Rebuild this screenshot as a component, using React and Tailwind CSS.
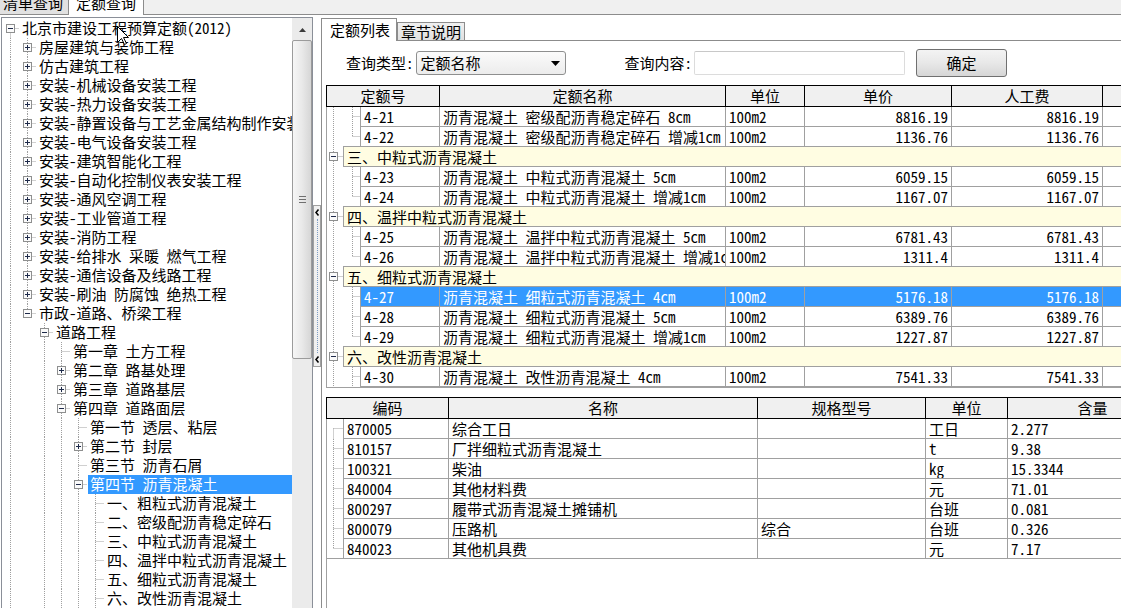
import React from 'react';

const FONT = "font-['Noto_Sans_Mono_CJK_SC','Noto_Sans_CJK_SC',sans-serif]";
const DOT = { stroke: '#a0a0a0', strokeDasharray: '1 1', strokeWidth: 1 };

const TREE = [
  { label: '北京市建设工程预算定额(2012)', level: 0, kind: 'minus', last: false },
  { label: '房屋建筑与装饰工程', level: 1, kind: 'plus' },
  { label: '仿古建筑工程', level: 1, kind: 'plus' },
  { label: '安装-机械设备安装工程', level: 1, kind: 'plus' },
  { label: '安装-热力设备安装工程', level: 1, kind: 'plus' },
  { label: '安装-静置设备与工艺金属结构制作安装工程', level: 1, kind: 'plus' },
  { label: '安装-电气设备安装工程', level: 1, kind: 'plus' },
  { label: '安装-建筑智能化工程', level: 1, kind: 'plus' },
  { label: '安装-自动化控制仪表安装工程', level: 1, kind: 'plus' },
  { label: '安装-通风空调工程', level: 1, kind: 'plus' },
  { label: '安装-工业管道工程', level: 1, kind: 'plus' },
  { label: '安装-消防工程', level: 1, kind: 'plus' },
  { label: '安装-给排水 采暖 燃气工程', level: 1, kind: 'plus' },
  { label: '安装-通信设备及线路工程', level: 1, kind: 'plus' },
  { label: '安装-刷油 防腐蚀 绝热工程', level: 1, kind: 'plus' },
  { label: '市政-道路、桥梁工程', level: 1, kind: 'minus', last: true },
  { label: '道路工程', level: 2, kind: 'minus' },
  { label: '第一章 土方工程', level: 3, kind: 'leaf' },
  { label: '第二章 路基处理', level: 3, kind: 'plus' },
  { label: '第三章 道路基层', level: 3, kind: 'plus' },
  { label: '第四章 道路面层', level: 3, kind: 'minus' },
  { label: '第一节 透层、粘层', level: 4, kind: 'leaf' },
  { label: '第二节 封层', level: 4, kind: 'plus' },
  { label: '第三节 沥青石屑', level: 4, kind: 'leaf' },
  { label: '第四节 沥青混凝土', level: 4, kind: 'minus', selected: true },
  { label: '一、粗粒式沥青混凝土', level: 5, kind: 'leaf' },
  { label: '二、密级配沥青稳定碎石', level: 5, kind: 'leaf' },
  { label: '三、中粒式沥青混凝土', level: 5, kind: 'leaf' },
  { label: '四、温拌中粒式沥青混凝土', level: 5, kind: 'leaf' },
  { label: '五、细粒式沥青混凝土', level: 5, kind: 'leaf' },
  { label: '六、改性沥青混凝土', level: 5, kind: 'leaf' },
];

function withGuides(nodes) {
  return nodes.map((n, i) => {
    const verticals = [];
    for (let k = 1; k < n.level; k++) {
      for (let j = i - 1; j >= 0; j--) {
        if (nodes[j].level === k) {
          if (!nodes[j].last) verticals.push(k);
          break;
        }
        if (nodes[j].level < k) break;
      }
    }
    if (n.level > 0 && !nodes[0].last) verticals.push(0);
    return { ...n, verticals };
  });
}

function Box({ cx, cy, minus }) {
  return (
    <g>
      <rect x={cx - 4} y={cy - 4} width="8" height="8" fill="#fbfbfb" stroke="#8e8f8f" />
      <line x1={cx - 2.5} y1={cy} x2={cx + 2.5} y2={cy} stroke="#1e2a4a" />
      {!minus && <line x1={cx} y1={cy - 2.5} x2={cx} y2={cy + 2.5} stroke="#1e2a4a" />}
    </g>
  );
}

function TreeRow({ node }) {
  const { label, level, kind, last, verticals, selected } = node;
  const width = 18 + 17 * level;
  const cx = 8.5 + 17 * level;
  return (
    <div className="flex h-[19px] items-start whitespace-nowrap">
      <svg width={width} height="19" className="block shrink-0">
        {verticals.map((k) => (
          <line key={k} x1={8.5 + 17 * k} y1="0" x2={8.5 + 17 * k} y2="19" {...DOT} />
        ))}
        {level > 0 ? (
          <line x1={cx} y1="0" x2={cx} y2={last ? 9.5 : 19} {...DOT} />
        ) : (
          !last && <line x1={cx} y1="9.5" x2={cx} y2="19" {...DOT} />
        )}
        <line x1={cx} y1="9.5" x2={width - 1} y2="9.5" {...DOT} />
        {kind !== 'leaf' && <Box cx={cx} cy={9.5} minus={kind === 'minus'} />}
      </svg>
      <span
        className={
          selected
            ? 'flex-1 h-[19px] bg-[#3399ff] text-white pl-[2px] leading-[17px]'
            : 'h-[19px] pl-[2px] leading-[17px]'
        }
      >
        {label}
      </span>
    </div>
  );
}

function Scrollbar() {
  return (
    <div className="w-[20px] shrink-0 bg-[#ebebeb] flex flex-col">
      <div className="h-[22px] flex items-center justify-center pt-[1px]">
        <svg width="7" height="4" className="block">
          <polygon points="0,4 7,4 3.5,0" fill="#3c3c3c" />
        </svg>
      </div>
      <div className="h-[319px] rounded-[2px] border border-[#9b9b9b] bg-gradient-to-r from-[#f6f6f6] via-[#e9e9e9] to-[#d6d6d6] flex items-center justify-center">
        <svg width="7" height="7" className="block">
          <line x1="0" y1="0.5" x2="7" y2="0.5" stroke="#6f6f6f" />
          <line x1="0" y1="3.5" x2="7" y2="3.5" stroke="#6f6f6f" />
          <line x1="0" y1="6.5" x2="7" y2="6.5" stroke="#6f6f6f" />
        </svg>
      </div>
    </div>
  );
}

function Chevron() {
  return (
    <svg width="5" height="7" className="block">
      <polyline points="3.5,0.5 1,3.5 3.5,6.5" fill="none" stroke="#000" strokeWidth="1.6" />
    </svg>
  );
}

function Splitter() {
  return (
    <div className="w-[8px] shrink-0 pt-[190px]">
      <div className="h-[162px] border border-[#a0a0a0] bg-[#f0f0f0] flex flex-col items-center py-[3px]">
        <Chevron />
        <div className="flex-1 my-[3px] border-l border-dotted border-[#7d9cc4]" />
        <Chevron />
      </div>
    </div>
  );
}

const TOP_ROWS = [
  { code: '4-21', name: '沥青混凝土 密级配沥青稳定碎石 8cm', price: '8816.19' },
  { code: '4-22', name: '沥青混凝土 密级配沥青稳定碎石 增减1cm', price: '1136.76', last: true },
  { group: '三、中粒式沥青混凝土' },
  { code: '4-23', name: '沥青混凝土 中粒式沥青混凝土 5cm', price: '6059.15' },
  { code: '4-24', name: '沥青混凝土 中粒式沥青混凝土 增减1cm', price: '1167.07', last: true },
  { group: '四、温拌中粒式沥青混凝土' },
  { code: '4-25', name: '沥青混凝土 温拌中粒式沥青混凝土 5cm', price: '6781.43' },
  { code: '4-26', name: '沥青混凝土 温拌中粒式沥青混凝土 增减1cm', price: '1311.4', last: true },
  { group: '五、细粒式沥青混凝土' },
  { code: '4-27', name: '沥青混凝土 细粒式沥青混凝土 4cm', price: '5176.18', sel: true },
  { code: '4-28', name: '沥青混凝土 细粒式沥青混凝土 5cm', price: '6389.76' },
  { code: '4-29', name: '沥青混凝土 细粒式沥青混凝土 增减1cm', price: '1227.87', last: true },
  { group: '六、改性沥青混凝土' },
  { code: '4-30', name: '沥青混凝土 改性沥青混凝土 4cm', price: '7541.33' },
];

const BOTTOM_ROWS = [
  ['870005', '综合工日', '', '工日', '2.277'],
  ['810157', '厂拌细粒式沥青混凝土', '', 't', '9.38'],
  ['100321', '柴油', '', 'kg', '15.3344'],
  ['840004', '其他材料费', '', '元', '71.01'],
  ['800297', '履带式沥青混凝土摊铺机', '', '台班', '0.081'],
  ['800079', '压路机', '综合', '台班', '0.326'],
  ['840023', '其他机具费', '', '元', '7.17'],
];

const HCELL = 'h-full shrink-0 border-r border-black bg-[#f0f0f0] text-center leading-[19px] overflow-hidden whitespace-nowrap';
const CELL = 'h-full shrink-0 border-r border-[#a0a0a0] px-[3px] leading-[19px] overflow-hidden whitespace-nowrap';
const NCELL = 'h-full shrink-0 border-r border-[#a0a0a0] pr-[3px] text-right leading-[19px] overflow-hidden whitespace-nowrap';

function TopDataRow({ row, nextIsGroup }) {
  const sel = row.sel;
  return (
    <div className="flex h-[20px]">
      <svg width="33" height="20" className="block shrink-0">
        <line x1="6.5" y1="0" x2="6.5" y2="20" {...DOT} />
        <line x1="25.5" y1="0" x2="25.5" y2={row.last ? 9.5 : 20} {...DOT} />
        <line x1="25.5" y1="9.5" x2="33" y2="9.5" {...DOT} />
        {nextIsGroup && <line x1="16" y1="19.5" x2="33" y2="19.5" stroke="#a0a0a0" />}
      </svg>
      <div className={sel ? 'flex flex-1 border-b border-[#a0a0a0] bg-[#3399ff] text-white' : 'flex flex-1 border-b border-[#a0a0a0]'}>
        <div className={`${CELL} w-[80px] border-l`}>{row.code}</div>
        <div className={`${CELL} w-[286px]`}>{row.name}</div>
        <div className={`${CELL} w-[79px]`}>100m2</div>
        <div className={`${NCELL} w-[147px]`}>{row.price}</div>
        <div className={`${NCELL} w-[151px]`}>{row.price}</div>
        <div className={`${CELL} w-[200px]`}></div>
      </div>
    </div>
  );
}

function TopGroupRow({ row }) {
  return (
    <div className="flex h-[20px]">
      <svg width="16" height="20" className="block shrink-0">
        <line x1="6.5" y1="0" x2="6.5" y2="20" {...DOT} />
        <line x1="6.5" y1="9.5" x2="16" y2="9.5" {...DOT} />
        <Box cx={6.5} cy={9.5} minus />
      </svg>
      <div className="flex-1 border-l border-b border-[#a0a0a0] bg-[#fffde2] pl-[3px] leading-[19px] whitespace-nowrap">
        {row.group}
      </div>
    </div>
  );
}

function TopTable() {
  return (
    <div className="h-[303px] shrink-0 overflow-hidden border-b border-[#a0a0a0] flex flex-col">
      <div className="flex h-[22px] shrink-0 border-t border-b border-l border-black">
        <div className={`${HCELL} w-[113px]`}>定额号</div>
        <div className={`${HCELL} w-[286px]`}>定额名称</div>
        <div className={`${HCELL} w-[79px]`}>单位</div>
        <div className={`${HCELL} w-[147px]`}>单价</div>
        <div className={`${HCELL} w-[151px]`}>人工费</div>
        <div className={`${HCELL} w-[200px]`}></div>
      </div>
      <div className="flex-1 border-l border-[#a0a0a0]">
        {TOP_ROWS.map((r, i) =>
          r.group ? (
            <TopGroupRow key={i} row={r} />
          ) : (
            <TopDataRow key={i} row={r} nextIsGroup={!!(TOP_ROWS[i + 1] && TOP_ROWS[i + 1].group)} />
          )
        )}
      </div>
    </div>
  );
}

function BottomTable() {
  const n = BOTTOM_ROWS.length;
  return (
    <div className="flex-1 flex flex-col mt-[9px] min-h-0">
      <div className="flex h-[22px] shrink-0 border-t border-b border-l border-black">
        <div className={`${HCELL} w-[122px]`}>编码</div>
        <div className={`${HCELL} w-[309px]`}>名称</div>
        <div className={`${HCELL} w-[168px]`}>规格型号</div>
        <div className={`${HCELL} w-[82px]`}>单位</div>
        <div className={`${HCELL} w-[170px]`}>含量</div>
      </div>
      <div className="flex-1 border-l border-[#a0a0a0]">
        {BOTTOM_ROWS.map((r, i) => (
          <div key={i} className="flex h-[20px]">
            <svg width="16" height="20" className="block shrink-0">
              <line x1="6.5" y1={i === 0 ? 9.5 : 0} x2="6.5" y2={i === n - 1 ? 9.5 : 20} {...DOT} />
              <line x1="6.5" y1="9.5" x2="16" y2="9.5" {...DOT} />
              <line x1="0" y1="19.5" x2="16" y2="19.5" stroke={i === n - 1 ? '#a0a0a0' : 'none'} />
            </svg>
            <div className="flex flex-1 border-b border-[#a0a0a0]">
              <div className={`${CELL} w-[106px] border-l`}>{r[0]}</div>
              <div className={`${CELL} w-[309px]`}>{r[1]}</div>
              <div className={`${CELL} w-[168px]`}>{r[2]}</div>
              <div className={`${CELL} w-[82px]`}>{r[3]}</div>
              <div className={`${CELL} w-[170px]`}>{r[4]}</div>
            </div>
          </div>
        ))}
      </div>
    </div>
  );
}

function QueryRow() {
  return (
    <div className="h-[44px] shrink-0 flex items-center pl-[20px] whitespace-nowrap">
      <span className="leading-[18px]">查询类型:</span>
      <div className="ml-[2px] w-[150px] h-[24px] rounded-[3px] border border-[#8e8f8f] bg-gradient-to-b from-[#fbfbfb] to-[#ececec] flex items-center justify-between pl-[4px] pr-[5px]">
        <span className="leading-[18px]">定额名称</span>
        <svg width="9" height="5" className="block">
          <polygon points="0,0 9,0 4.5,5" fill="#000" />
        </svg>
      </div>
      <span className="ml-[59px] leading-[18px]">查询内容:</span>
      <div className="ml-[2px] w-[211px] h-[24px] rounded-[2px] border border-[#dcdcdc] border-t-[#c8c8c8] bg-white" />
      <div className="ml-[11px] w-[91px] h-[28px] rounded-[3px] border border-[#707070] bg-gradient-to-b from-[#f3f3f3] via-[#e8e8e8] to-[#d6d6d6] flex items-center justify-center">
        <span className="leading-[18px]">确定</span>
      </div>
    </div>
  );
}

function RightPanel() {
  return (
    <div className="flex-1 min-w-0 flex flex-col pt-[3px]">
      <div className="flex items-end h-[23px] shrink-0">
        <div className="w-[76px] h-[23px] border-l border-t border-r border-[#8c8c8c] bg-white pl-[8px] leading-[21px] whitespace-nowrap">
          定额列表
        </div>
        <div className="w-[68px] h-[19px] border border-[#8c8c8c] bg-gradient-to-b from-[#f0f0f0] to-[#e0e0e0] text-center leading-[17px] whitespace-nowrap">
          章节说明
        </div>
        <div className="flex-1 h-full border-b border-[#8c8c8c]" />
      </div>
      <div className="flex-1 min-h-0 flex flex-col border-l border-[#8c8c8c] bg-white pl-[4px]">
        <QueryRow />
        <TopTable />
        <BottomTable />
      </div>
    </div>
  );
}

function LeftPanel() {
  const rows = withGuides(TREE);
  return (
    <div className="w-[313px] shrink-0 pl-[1px] pt-[2px] flex">
      <div className="flex-1 flex border-l border-t border-r border-[#8a8f98] bg-white min-h-0">
        <div className="w-[290px] shrink-0 pt-[1px] overflow-hidden">
          {rows.map((n, i) => (
            <TreeRow key={i} node={n} />
          ))}
        </div>
        <Scrollbar />
      </div>
    </div>
  );
}

export default function App() {
  return (
    <div className={`relative w-[1121px] h-[608px] overflow-hidden bg-white text-black text-[15px] flex flex-col ${FONT}`}>
      <div className="flex h-[15px] shrink-0 bg-[#f0f0f0]">
        <div className="w-[69px] h-[15px] bg-[#e1e1e1] border-r border-b border-[#8c8c8c] overflow-hidden">
          <div className="pl-[3px] -mt-[7px] leading-[19px] whitespace-nowrap">清单查询</div>
        </div>
        <div className="w-[75px] h-[15px] bg-white border-r border-[#8c8c8c] overflow-hidden">
          <div className="pl-[7px] -mt-[7px] leading-[19px] whitespace-nowrap">定额查询</div>
        </div>
        <div className="flex-1 border-b border-[#8c8c8c]" />
      </div>
      <div className="flex flex-1 min-h-0">
        <LeftPanel />
        <Splitter />
        <RightPanel />
      </div>
      <svg width="13" height="20" className="absolute left-[117px] top-[26px]">
        <path d="M0.5 0.5 L0.5 16.5 L4.5 12.5 L7.5 18.5 L9.5 17.5 L6.5 11.5 L11.5 11.5 Z" fill="#fff" stroke="#000" strokeLinejoin="round" />
      </svg>
    </div>
  );
}
